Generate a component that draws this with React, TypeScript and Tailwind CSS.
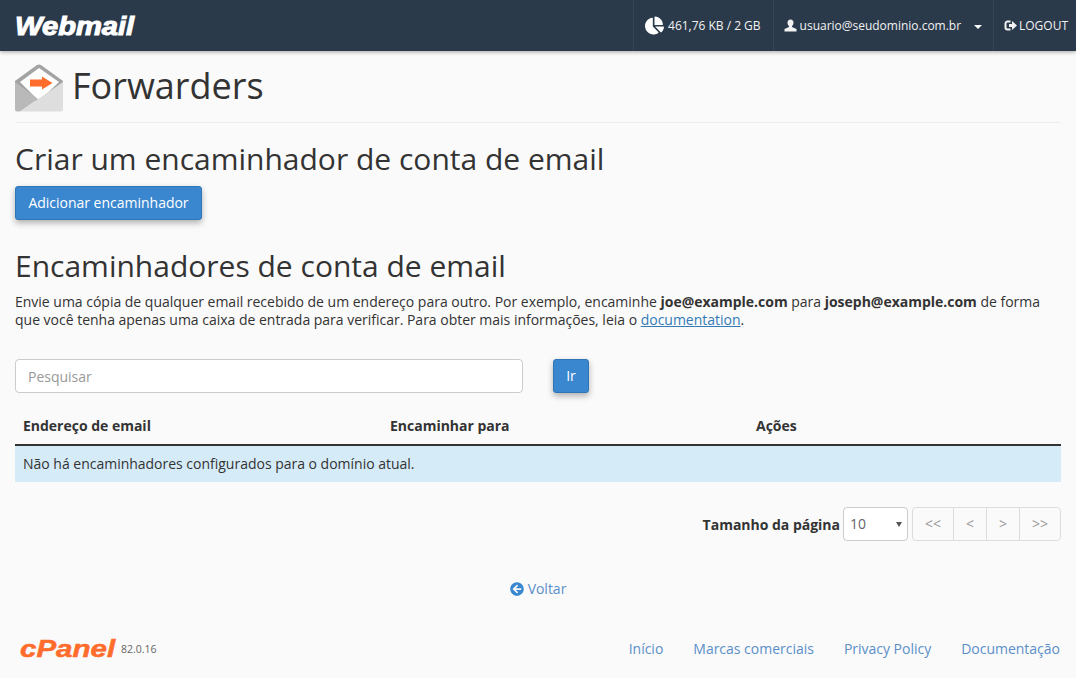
import { FaArrowCircleLeft, FaChartPie } from "react-icons/fa";

const font = "font-['Open_Sans',sans-serif]";

const EnvelopeIcon = () => (
  <svg width="48" height="48" viewBox="0 0 48 48" className="shrink-0">
    <path d="M0 17 L22 1 Q24 0 26 1 L48 17 V20 L24 40 L0 20 Z" fill="#a3a3a3" />
    <path d="M5 18 L24 4 L44 18 L24 37 Z" fill="#ffffff" />
    <path d="M0 18 L23 35 L5 47.5 H2 a2 2 0 0 1 -2 -2 Z" fill="#b9b9b9" />
    <path d="M48 18 V45.5 a2 2 0 0 1 -2 2 H5 Z" fill="#dedede" />
    <path d="M15 15.5 H27 V12.5 L37.5 19 L27 25.5 V22.5 H15 Z" fill="#ff6c2c" />
  </svg>
);

const UserIcon = () => (
  <svg width="13" height="13" viewBox="0 0 13 13" className="shrink-0" fill="currentColor">
    <path d="M6.5 0.5c2 0 3 1.4 3 3.2 0 1.5-.7 2.7-1.5 3.3v1l4.5 2v2.5H0.5V10l4.5-2V7C4.2 6.4 3.5 5.2 3.5 3.7c0-1.8 1-3.2 3-3.2z" />
  </svg>
);

const LogoutIcon = () => (
  <svg width="13" height="11" viewBox="0 0 13 11" className="shrink-0">
    <path d="M6.5 1.5H3.5a2 2 0 0 0-2 2v4a2 2 0 0 0 2 2h3" fill="none" stroke="currentColor" strokeWidth="2" />
    <path d="M5 4h3V1l5 4.5L8 10V7H5z" fill="currentColor" />
  </svg>
);

const TopBar = () => (
  <header className="flex h-[51px] items-center justify-between bg-[#2b3a4b] pl-[15px] text-white shadow-[0_1px_4px_rgba(0,0,0,0.35)]">
    <span className="inline-block origin-left scale-x-[1.12] font-['Liberation_Sans',sans-serif] text-[26px] font-bold italic leading-none [-webkit-text-stroke:1px_white]">
      Webmail
    </span>
    <div className="flex h-full text-xs text-[#f2f2f2]">
      <div className="flex items-center gap-[4px] border-l border-[#34465a] pl-[11px] pr-[12px]">
        <FaChartPie className="size-[19px] text-white" />
        <span>461,76 KB / 2 GB</span>
      </div>
      <div className="flex items-center border-l border-[#34465a] pl-[10px] pr-[11px]">
        <UserIcon />
        <span className="ml-[3px]">usuario@seudominio.com.br</span>
        <span className="ml-[13px] mt-[2px] h-0 w-0 border-x-[4px] border-t-[4px] border-x-transparent border-t-white" />
      </div>
      <div className="flex items-center gap-[2px] border-l border-[#34465a] pl-[10px] pr-[8px]">
        <LogoutIcon />
        <span>LOGOUT</span>
      </div>
    </div>
  </header>
);

const Pager = () => (
  <div className="ml-[4px] flex h-[34px] rounded border border-[#dddddd] text-sm text-[#999999]">
    <span className="flex w-[41px] items-center justify-center border-r border-[#dddddd]">&lt;&lt;</span>
    <span className="flex w-[33px] items-center justify-center border-r border-[#dddddd]">&lt;</span>
    <span className="flex w-[33px] items-center justify-center border-r border-[#dddddd]">&gt;</span>
    <span className="flex w-[40px] items-center justify-center">&gt;&gt;</span>
  </div>
);

export default function App() {
  return (
    <div className={`${font} h-[678px] overflow-hidden bg-[#fafafa] text-sm tracking-[-0.012px] text-[#333333]`}>
      <TopBar />

      <main className="px-[15px]">
        <div className="flex h-[72px] items-center gap-[9px] border-b border-[#eeeeee] pt-[2px]">
          <EnvelopeIcon />
          <h1 className="mb-[4px] text-[36px] leading-none">Forwarders</h1>
        </div>

        <h2 className="mt-[19px] text-[30px] leading-[33px] tracking-normal">Criar um encaminhador de conta de email</h2>
        <button className="mt-[11px] block h-[34px] w-[187px] rounded-[3px] border border-[#2e76b5] bg-[#3a87cf] text-sm text-white shadow-[0_3px_6px_rgba(0,0,0,0.3)]">
          Adicionar encaminhador
        </button>

        <h2 className="mt-[29px] text-[30px] leading-[33px] tracking-normal">Encaminhadores de conta de email</h2>
        <p className="mt-[11px] leading-[18px]">
          Envie uma cópia de qualquer email recebido de um endereço para outro. Por exemplo, encaminhe{" "}
          <b>joe@example.com</b> para <b>joseph@example.com</b> de forma que você tenha apenas uma caixa de
          entrada para verificar. Para obter mais informações, leia o{" "}
          <a className="text-[#337ab7] underline">documentation</a>.
        </p>

        <div className="mt-[30px] flex items-start gap-[30px]">
          <input
            placeholder="Pesquisar"
            className="h-[34px] w-[508px] rounded border border-[#cccccc] bg-white px-3 text-sm placeholder:text-[#999999]"
          />
          <button className="h-[34px] w-[36px] rounded-[3px] border border-[#2e76b5] bg-[#3a87cf] text-sm text-white shadow-[0_3px_6px_rgba(0,0,0,0.3)]">
            Ir
          </button>
        </div>

        <div className="mt-[15px] grid h-[38px] grid-cols-[367px_366px_1fr] items-center border-b-2 border-[#333333] px-2 font-bold">
          <span>Endereço de email</span>
          <span>Encaminhar para</span>
          <span>Ações</span>
        </div>
        <div className="flex h-[36px] items-center bg-[#d6ebf8] px-2">
          Não há encaminhadores configurados para o domínio atual.
        </div>

        <div className="mt-[25px] flex items-center justify-end">
          <b className="mr-[3px] mt-[2px]">Tamanho da página</b>
          <div className="flex h-[34px] w-[65px] items-center justify-between rounded border border-[#cccccc] bg-white pl-[6px] pr-[5px] text-[#666666]">
            <span>10</span>
            <span className="h-0 w-0 border-x-[3.5px] border-t-[5px] border-x-transparent border-t-[#555555]" />
          </div>
          <Pager />
        </div>

        <div className="mt-[38px] flex items-center justify-center gap-[4px] text-[#5b8fc9]">
          <FaArrowCircleLeft className="size-[14px] text-[#3a87cf]" />
          <span>Voltar</span>
        </div>

        <footer className="mt-[38px] flex items-center justify-between pr-px">
          <div className="flex items-center pl-[5px]">
            <span className="inline-block w-[96px] origin-left scale-x-[1.23] font-['Liberation_Sans',sans-serif] text-[24px] font-bold italic leading-none text-[#ff6c2c] [-webkit-text-stroke:0.5px_#ff6c2c]">
              cPanel
            </span>
            <span className="ml-[5px] mt-[1px] text-[10.5px] text-[#666666]">82.0.16</span>
          </div>
          <nav className="flex gap-[30px] text-[#5b8fc9]">
            <a>Início</a>
            <a>Marcas comerciais</a>
            <a>Privacy Policy</a>
            <a>Documentação</a>
          </nav>
        </footer>
      </main>
    </div>
  );
}
